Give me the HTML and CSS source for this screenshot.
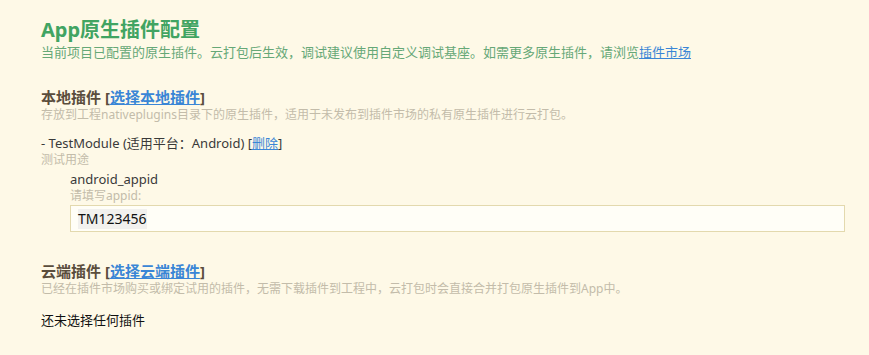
FILE: index.html
```html
<!DOCTYPE html>
<html lang="zh">
<head>
<meta charset="utf-8">
<title>App原生插件配置</title>
<link rel="stylesheet" href="styles.css">
</head>
<body>
<div class="page">
  <h1 class="title">App原生插件配置</h1>
  <p class="subtitle">当前项目已配置的原生插件。云打包后生效，调试建议使用自定义调试基座。如需更多原生插件，请浏览<a class="link" href="#">插件市场</a></p>

  <section class="section local">
    <h2 class="heading">本地插件 [<a class="link" href="#">选择本地插件</a>]</h2>
    <p class="desc">存放到工程nativeplugins目录下的原生插件，适用于未发布到插件市场的私有原生插件进行云打包。</p>
    <div class="plugin">
      <div class="plugin-name">- TestModule (适用平台：Android) [<a class="link" href="#">删除</a>]</div>
      <div class="plugin-desc">测试用途</div>
      <div class="param">
        <div class="param-name">android_appid</div>
        <div class="param-hint">请填写appid:</div>
        <div class="input"><span class="input-val">TM123456</span></div>
      </div>
    </div>
  </section>

  <section class="section cloud">
    <h2 class="heading">云端插件 [<a class="link" href="#">选择云端插件</a>]</h2>
    <p class="desc">已经在插件市场购买或绑定试用的插件，无需下载插件到工程中，云打包时会直接合并打包原生插件到App中。</p>
    <div class="empty">还未选择任何插件</div>
  </section>
</div>
</body>
</html>
```
FILE: styles.css
```css
html, body {
  margin: 0;
  padding: 0;
  background: #fef9e7;
}
body {
  font-family: "Noto Sans", "Noto Sans CJK SC", sans-serif;
  color: #333;
}
.page {
  padding: 18px 24px 0 41px;
}
.title {
  margin: 0;
  font-size: 20px;
  line-height: 24px;
  font-weight: bold;
  color: #41a462;
}
.subtitle {
  margin: 0;
  font-size: 13px;
  line-height: 20px;
  color: #66a877;
}
.link {
  color: #3a86d6;
  text-decoration: underline;
}
.section.local {
  margin-top: 26px;
}
.section.cloud {
  margin-top: 30px;
}
.heading {
  margin: 0;
  font-size: 15px;
  line-height: 18px;
  font-weight: bold;
  color: #5a4d3c;
}
.desc {
  margin: 0;
  font-size: 12px;
  line-height: 18px;
  color: #c3bcaa;
}
.plugin {
  margin-top: 10px;
}
.plugin-name {
  font-size: 13px;
  line-height: 18px;
  color: #3a3a3a;
}
.plugin-desc {
  font-size: 12px;
  line-height: 16px;
  color: #c3bcaa;
}
.param {
  margin-left: 29px;
  margin-top: 2px;
}
.param-name {
  font-size: 13px;
  line-height: 18px;
  color: #3a3a3a;
}
.param-hint {
  font-size: 12px;
  line-height: 16px;
  color: #c3bcaa;
}
.input {
  margin-top: 1px;
  height: 25px;
  border: 1px solid #e3d9ae;
  background: #fffef7;
  display: flex;
  align-items: center;
  padding-left: 7px;
  box-sizing: content-box;
}
.input-val {
  font-size: 14px;
  line-height: 20px;
  color: #111;
  background: #f2f1ee;
}
.empty {
  margin-top: 12px;
  font-size: 13px;
  line-height: 20px;
  color: #111;
}
```
